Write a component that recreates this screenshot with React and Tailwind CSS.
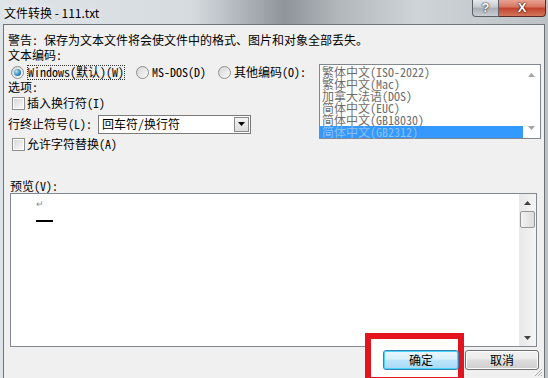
import React from "react";

const F = "font-['Noto_Sans_Mono_CJK_SC','Noto_Sans_CJK_SC',sans-serif]";

function Radio({ checked }) {
  return (
    <span className="w-[13px] h-[13px] rounded-full border border-[#8e8f8f] bg-gradient-to-br from-[#d4d4d4] to-[#fcfcfc] flex items-center justify-center shrink-0">
      {checked && (
        <span className="w-[7px] h-[7px] rounded-full bg-[radial-gradient(circle_at_35%_35%,#bfe6f8,#2a86c0_60%,#1c4f78)]" />
      )}
    </span>
  );
}

function Check() {
  return (
    <span className="w-[13px] h-[13px] border border-[#8e8f8f] bg-white p-[1px] shrink-0 flex">
      <span className="flex-1 bg-gradient-to-br from-[#d8d8d8] to-[#f8f8f8]" />
    </span>
  );
}

function Btn({ children, def }) {
  return (
    <div
      className={
        "relative z-10 h-[20px] rounded-[3px] border flex items-center justify-center text-[12px] leading-none text-black " +
        (def
          ? "w-[76px] border-[#3c7fb1] bg-[linear-gradient(#eaf6fd_0%,#d9f0fc_45%,#bee6fd_50%,#a7d9f5_100%)] shadow-[inset_0_0_0_1px_#48d5fd]"
          : "w-[74px] border-[#707070] bg-[linear-gradient(#f2f2f2_0%,#ebebeb_45%,#dddddd_50%,#cfcfcf_100%)] shadow-[inset_0_0_0_1px_#fcfcfc]")
      }
    >
      {children}
    </div>
  );
}

export default function App() {
  const items = [
    "繁体中文(ISO-2022)",
    "繁体中文(Mac)",
    "加拿大法语(DOS)",
    "简体中文(EUC)",
    "简体中文(GB18030)",
  ];
  return (
    <div className={"relative w-[548px] h-[378px] overflow-hidden flex flex-col bg-[linear-gradient(90deg,#dfe4e9_0%,#d6dbe0_35%,#8f949a_52%,#b3b8bd_62%,#cfd4d9_76%,#bcc1c6_100%)] " + F}>
      {/* title bar */}
      <div className="h-[24px] shrink-0 flex items-start">
        <div className="pl-[4px] pt-[6px] text-[12px] leading-[13px] text-black font-['Noto_Sans_CJK_SC',sans-serif] [text-shadow:0_0_6px_#ffffff]">
          文件转换 - 111.txt
        </div>
        <div className="ml-auto mr-[2px] flex h-[17px]">
          <div className="w-[27px] h-full rounded-bl-[4px] border border-t-0 border-[#5b6068] bg-[linear-gradient(#e5e8ec_0%,#c5cad0_45%,#a9aeb5_50%,#c9ced4_100%)] flex items-center justify-center text-white text-[13px] font-bold font-['Liberation_Sans',sans-serif] [text-shadow:0_0_2px_#333,0_0_1px_#000]">
            ?
          </div>
          <div className="w-[47px] h-full rounded-br-[4px] border border-l-0 border-t-0 border-[#5b2a24] bg-[linear-gradient(#e8a394_0%,#d5735f_45%,#c2412c_50%,#d2765a_100%)] flex items-center justify-center text-white text-[13px] font-bold font-['Liberation_Sans',sans-serif] [text-shadow:0_0_2px_#3a0a00,0_0_1px_#000]">
            X
          </div>
        </div>
      </div>

      {/* client */}
      <div className="relative flex-1 mx-[3px] border-t border-l border-r border-[#6f7479] bg-[#f0f0f0] flex flex-col text-[12px] leading-[12px] text-black">
        <div className="pl-[4px] pt-[9px] h-[23px]">警告: 保存为文本文件将会使文件中的格式、图片和对象全部丢失。</div>
        <div className="pl-[4px] pt-[1px] h-[15px]">文本编码:</div>
        <div className="flex pt-[1px]">
          <div className="w-[315px] flex flex-col">
            <div className="flex items-center h-[16px] pl-[7px]">
              <Radio checked />
              <span className="ml-[3px] h-[15px] flex items-center border border-dotted border-[#333]">Windows(默认)(W)</span>
              <span className="ml-[11px]"><Radio /></span>
              <span className="ml-[3px]">MS-DOS(D)</span>
              <span className="ml-[12px]"><Radio /></span>
              <span className="ml-[3px]">其他编码(O):</span>
            </div>
            <div className="pl-[4px] pt-[1px] h-[15px]">选项:</div>
            <div className="flex items-center h-[16px] pl-[8px] gap-[2px]">
              <Check />
              <span>插入换行符(I)</span>
            </div>
            <div className="flex items-center h-[22px] mt-[2px] pl-[4px]">
              <span className="w-[90px]">行终止符号(L):</span>
              <div className="w-[153px] h-[19px] border border-[#7a7a7a] bg-white flex items-center">
                <span className="pl-[3px] flex-1">回车符/换行符</span>
                <span className="w-[15px] h-[15px] mr-[1px] border border-[#8a8a8a] bg-[linear-gradient(#f4f4f4,#dcdcdc)] flex items-center justify-center">
                  <svg width="7" height="4" viewBox="0 0 7 4"><path d="M0 0H7L3.5 4Z" fill="#000" /></svg>
                </span>
              </div>
            </div>
            <div className="flex items-center h-[16px] mt-[1px] pl-[8px] gap-[2px]">
              <Check />
              <span>允许字符替换(A)</span>
            </div>
          </div>
          <div className="w-[222px] h-[75px] border border-[#828790] bg-white flex">
            <div className="flex-1 flex flex-col pt-[1px] text-[#6d6d6d]">
              {items.map((t) => (
                <div key={t} className="h-[12px] pl-[2px] leading-[12px]">{t}</div>
              ))}
              <div className="h-[12px] pl-[2px] leading-[12px] bg-[#3399ff] text-[#8dc0f2]">简体中文(GB2312)</div>
            </div>
            <div className="w-[17px] flex flex-col items-center justify-between py-[8px]">
              <svg width="7" height="4" viewBox="0 0 7 4"><path d="M0 4H7L3.5 0Z" fill="#a3a3a3" /></svg>
              <svg width="7" height="4" viewBox="0 0 7 4"><path d="M0 0H7L3.5 4Z" fill="#a3a3a3" /></svg>
            </div>
          </div>
        </div>

        <div className="pl-[6px] mt-[28px] h-[13px]">预览(V):</div>
        <div className="ml-[6px] mr-[7px] h-[154px] border border-[#828790] bg-white flex">
          <div className="flex-1 relative">
            <div className="pl-[25px] pt-[5px] text-[9px] leading-[9px] text-[#8a8a8a]">↵</div>
            <div className="ml-[25px] mt-[12px] w-[17px] h-[2px] bg-black" />
          </div>
          <div className="w-[17px] flex flex-col items-center bg-[linear-gradient(90deg,#e8e8e8,#f5f5f5)]">
            <div className="h-[17px] flex items-center justify-center">
              <svg width="7" height="4" viewBox="0 0 7 4"><path d="M0 4H7L3.5 0Z" fill="#404040" /></svg>
            </div>
            <div className="w-[15px] h-[17px] rounded-[2px] border border-[#979797] bg-[linear-gradient(90deg,#f3f3f3,#dcdcdc)]" />
            <div className="flex-1" />
            <div className="h-[17px] flex items-center justify-center">
              <svg width="7" height="4" viewBox="0 0 7 4"><path d="M0 0H7L3.5 4Z" fill="#404040" /></svg>
            </div>
          </div>
        </div>

        <div className="flex justify-end gap-[6px] pr-[5px] pt-[3px]">
          <Btn def>确定</Btn>
          <Btn>取消</Btn>
        </div>

        {/* annotation */}
        <div className="absolute left-[361px] top-[308px] w-[99px] h-[50px] border-[6px] border-[#e3141d] bg-white" />
        <svg className="absolute right-[1px] bottom-[1px]" width="10" height="10" viewBox="0 0 10 10">
          <path d="M9 2L2 9M9 5L5 9M9 8L8 9" stroke="#b0b0b0" strokeWidth="1" />
        </svg>
      </div>
    </div>
  );
}
